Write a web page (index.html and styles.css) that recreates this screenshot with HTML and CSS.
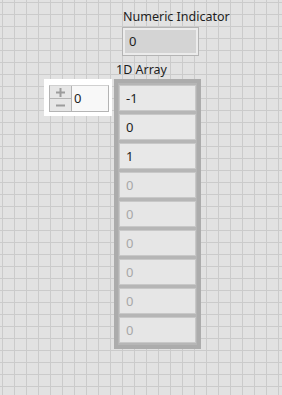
FILE: index.html
```html
<!DOCTYPE html>
<html lang="en">
<head>
    <meta charset="UTF-8">
    <title>Front Panel</title>
    <link rel="stylesheet" href="styles.css">
</head>
<body>
    <div class="panel">
        <!-- numeric indicator -->
        <div class="item indicator">
            <div class="label">Numeric Indicator</div>
            <div class="ind-box">
                <div class="ind-field">0</div>
            </div>
        </div>

        <!-- index control of the array -->
        <div class="item index">
            <div class="index-inner">
                <div class="spin">
                    <div class="spin-btn">
                        <svg width="9" height="9" viewBox="0 0 9 9"><path d="M0 4.5h9M4.5 0v9" stroke="#9c9c9c" stroke-width="2"/></svg>
                    </div>
                    <div class="spin-btn">
                        <svg width="9" height="9" viewBox="0 0 9 9"><path d="M0 4.5h9" stroke="#9c9c9c" stroke-width="2"/></svg>
                    </div>
                </div>
                <div class="index-field">0</div>
            </div>
        </div>

        <!-- 1D array -->
        <div class="item array">
            <div class="label">1D Array</div>
            <div class="array-frame">
                <div class="cell">-1</div>
                <div class="cell">0</div>
                <div class="cell">1</div>
                <div class="cell empty">0</div>
                <div class="cell empty">0</div>
                <div class="cell empty">0</div>
                <div class="cell empty">0</div>
                <div class="cell empty">0</div>
                <div class="cell empty">0</div>
            </div>
        </div>
    </div>
</body>
</html>
```

FILE: styles.css
```css
body {
    margin: 0;
    font-family: "Noto Sans", "Open Sans", sans-serif;
    font-size: 12.5px;
    color: #1e1e1e;
}
.panel {
    position: relative;
    width: 282px;
    height: 395px;
    background-color: #e2e2e2;
    background-image:
        linear-gradient(to right, #cbcbcb 1px, transparent 1px),
        linear-gradient(to bottom, #cbcbcb 1px, transparent 1px);
    background-size: 12px 12px;
    background-position: 2px 2px;
    overflow: hidden;
}
.item {
    position: absolute;
}
.label {
    line-height: 16px;
    white-space: nowrap;
}

/* indicator */
.indicator {
    left: 122px;
    top: 9px;
}
.indicator .label {
    margin-left: 1px;
    margin-bottom: 2px;
}
.ind-box {
    width: 71px;
    height: 23px;
    border: 1px solid #b4b4b4;
    background-color: #ececec;
    padding: 2px;
}
.ind-field {
    height: 100%;
    background-color: #d4d4d4;
    padding-left: 4px;
    line-height: 23px;
    font-size: 13px;
}

/* index control */
.index {
    left: 44px;
    top: 79px;
    width: 68px;
    height: 37px;
    background-color: #ffffff;
    box-sizing: border-box;
    padding: 6px 3px 6px 5px;
}
.index-inner {
    display: flex;
    height: 25px;
    border: 1px solid #b4b4b4;
    border-top-color: #d0d0d0;
}
.spin {
    display: flex;
    flex-direction: column;
    width: 21px;
    border-right: 1px solid #b4b4b4;
}
.spin-btn {
    flex: 1;
    display: flex;
    align-items: center;
    justify-content: center;
    background-color: #e6e6e6;
}
.spin-btn + .spin-btn {
    border-top: 1px solid #b4b4b4;
}
.index-field {
    flex: 1;
    background-color: #f8f8f8;
    padding-left: 2px;
    line-height: 25px;
    font-size: 13px;
}

/* array */
.array {
    left: 114px;
    top: 62px;
}
.array .label {
    margin-left: 2px;
    margin-bottom: 1px;
}
.array-frame {
    width: 77px;
    border: 4px solid #acacac;
    background-color: #b6b6b6;
    padding: 2px 1px;
    display: flex;
    flex-direction: column;
    gap: 3px;
}
.cell {
    height: 24px;
    line-height: 24px;
    border: 1px solid #c8c8c8;
    background-color: #e8e8e8;
    padding-left: 6px;
    font-size: 13px;
}
.cell.empty {
    color: #a8a8a8;
    background-color: #e6e6e6;
}
```
